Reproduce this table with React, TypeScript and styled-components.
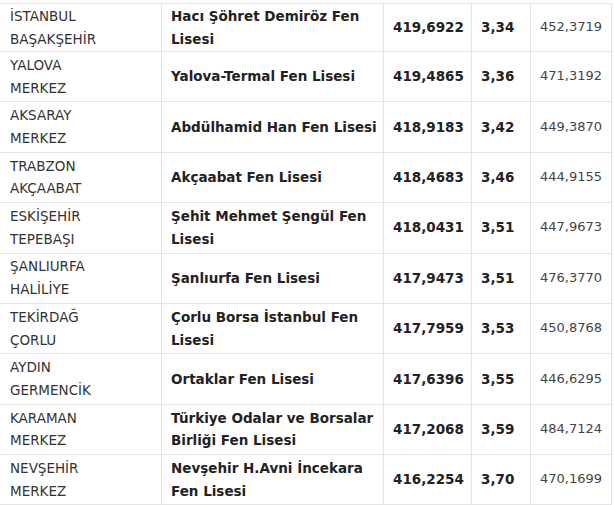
import * as React from "react"
import styled, { createGlobalStyle } from "styled-components"

const GlobalStyle = createGlobalStyle`
  html, body {
    margin: 0;
    padding: 0;
    background: #ffffff;
  }
  body {
    font-family: "DejaVu Sans", Verdana, sans-serif;
    font-size: 13.5px;
    color: #333333;
  }
`

const Table = styled.div`
  margin-top: 3px;
  width: 612px;
  border-top: 1px solid #e4e4e4;
`

const Row = styled.div<{ first?: boolean }>`
  display: grid;
  grid-template-columns: 162px 222px 88px 59px 81px;
  box-sizing: border-box;
  height: ${props => (props.first ? "48px" : "50.375px")};
  border-bottom: 1px solid #e4e4e4;
`

const Cell = styled.div<{ bold?: boolean; muted?: boolean }>`
  display: flex;
  align-items: center;
  padding: 0 4px 0 9px;
  border-right: 1px solid #e4e4e4;
  line-height: 22.7px;
  font-size: ${props => (props.muted ? "13px" : "13.5px")};
  font-weight: ${props => (props.bold ? 700 : 400)};
  color: ${props => (props.bold ? "#222222" : props.muted ? "#444444" : "#333333")};
  white-space: nowrap;
  overflow: hidden;
`

const Place = styled(Cell)`
  padding-left: 10px;
`

interface School {
  city: string
  district: string
  name: string[]
  score: string
  rank: string
  base: string
}

const schools: School[] = [
  { city: "İSTANBUL", district: "BAŞAKŞEHİR", name: ["Hacı Şöhret Demiröz Fen", "Lisesi"], score: "419,6922", rank: "3,34", base: "452,3719" },
  { city: "YALOVA", district: "MERKEZ", name: ["Yalova-Termal Fen Lisesi"], score: "419,4865", rank: "3,36", base: "471,3192" },
  { city: "AKSARAY", district: "MERKEZ", name: ["Abdülhamid Han Fen Lisesi"], score: "418,9183", rank: "3,42", base: "449,3870" },
  { city: "TRABZON", district: "AKÇAABAT", name: ["Akçaabat Fen Lisesi"], score: "418,4683", rank: "3,46", base: "444,9155" },
  { city: "ESKİŞEHİR", district: "TEPEBAŞI", name: ["Şehit Mehmet Şengül Fen", "Lisesi"], score: "418,0431", rank: "3,51", base: "447,9673" },
  { city: "ŞANLIURFA", district: "HALİLİYE", name: ["Şanlıurfa Fen Lisesi"], score: "417,9473", rank: "3,51", base: "476,3770" },
  { city: "TEKİRDAĞ", district: "ÇORLU", name: ["Çorlu Borsa İstanbul Fen", "Lisesi"], score: "417,7959", rank: "3,53", base: "450,8768" },
  { city: "AYDIN", district: "GERMENCİK", name: ["Ortaklar Fen Lisesi"], score: "417,6396", rank: "3,55", base: "446,6295" },
  { city: "KARAMAN", district: "MERKEZ", name: ["Türkiye Odalar ve Borsalar", "Birliği Fen Lisesi"], score: "417,2068", rank: "3,59", base: "484,7124" },
  { city: "NEVŞEHİR", district: "MERKEZ", name: ["Nevşehir H.Avni İncekara", "Fen Lisesi"], score: "416,2254", rank: "3,70", base: "470,1699" },
]

const Lines: React.FC<{ lines: string[] }> = ({ lines }) => (
  <span>
    {lines.map((line, i) => (
      <React.Fragment key={i}>
        {i > 0 && <br />}
        {line}
      </React.Fragment>
    ))}
  </span>
)

export default function App() {
  return (
    <>
      <GlobalStyle />
      <Table>
        {schools.map((s, i) => (
          <Row key={s.name.join(" ")} first={i === 0}>
            <Place>
              <Lines lines={[s.city, s.district]} />
            </Place>
            <Cell bold>
              <Lines lines={s.name} />
            </Cell>
            <Cell bold>{s.score}</Cell>
            <Cell bold>{s.rank}</Cell>
            <Cell muted>{s.base}</Cell>
          </Row>
        ))}
      </Table>
    </>
  )
}
